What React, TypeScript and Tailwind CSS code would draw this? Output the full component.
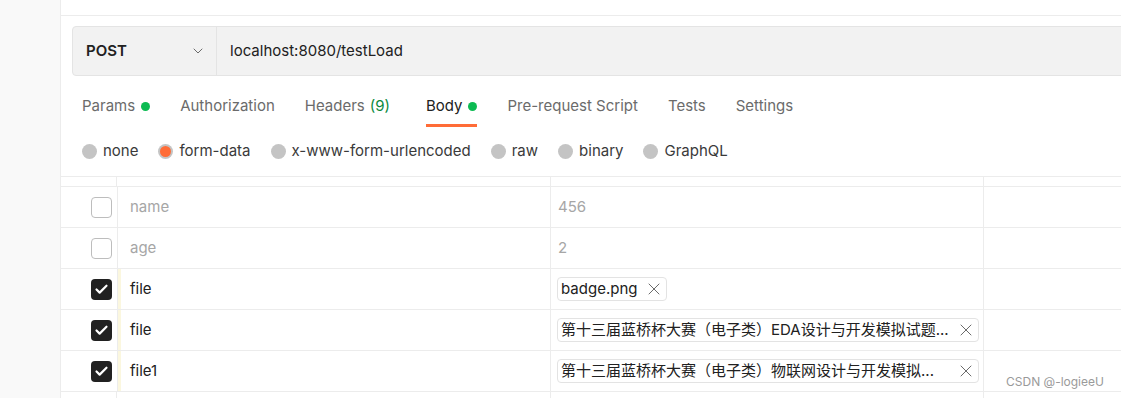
import { ChevronDown, X, Check } from 'lucide-react'

const font = { fontFamily: 'Inter, "Noto Sans CJK SC", sans-serif' }

const tabs = [
  { label: 'Params', dot: true },
  { label: 'Authorization' },
  { label: 'Headers', count: '(9)' },
  { label: 'Body', dot: true, active: true },
  { label: 'Pre-request Script' },
  { label: 'Tests' },
  { label: 'Settings' },
]

const bodyTypes = ['none', 'form-data', 'x-www-form-urlencoded', 'raw', 'binary', 'GraphQL']

type Row = {
  key: string
  checked: boolean
  value?: string
  file?: string
  wide?: boolean
}

const rows: Row[] = [
  { key: 'name', checked: false, value: '456' },
  { key: 'age', checked: false, value: '2' },
  { key: 'file', checked: true, file: 'badge.png' },
  { key: 'file', checked: true, file: '第十三届蓝桥杯大赛（电子类）EDA设计与开发模拟试题...', wide: true },
  { key: 'file1', checked: true, file: '第十三届蓝桥杯大赛（电子类）物联网设计与开发模拟...', wide: true },
]

function Checkbox({ checked }: { checked: boolean }) {
  if (checked) {
    return (
      <div className="flex h-[21px] w-[21px] items-center justify-center rounded-[4px] bg-[#212121]">
        <Check size={15} strokeWidth={3.5} className="text-white" />
      </div>
    )
  }
  return <div className="h-[21px] w-[21px] rounded-[4px] border border-[#bdbdbd] bg-white" />
}

function FileChip({ name, wide }: { name: string; wide?: boolean }) {
  return (
    <div
      className={`flex h-[24px] items-center rounded-[4px] border border-[#e3e3e3] pl-[3px] pr-[2px] ${
        wide ? 'w-[422px] justify-between' : 'gap-[7px]'
      }`}
    >
      <span className="whitespace-nowrap text-[15px] text-[#212121]">{name}</span>
      <X size={20} strokeWidth={1.2} className="shrink-0 text-[#6b6b6b]" />
    </div>
  )
}

function GridRow({ h }: { h: string }) {
  return (
    <div className={`grid shrink-0 grid-cols-[56px_434px_433px_1fr] border-b border-[#ececec] ${h}`}>
      <div className="border-r border-[#ececec]" />
      <div className="border-r border-[#ececec]" />
      <div className="border-r border-[#ececec]" />
      <div />
    </div>
  )
}

export default function App() {
  return (
    <div className="relative flex h-[398px] w-[1121px] overflow-hidden bg-white" style={font}>
      <div className="w-[61px] shrink-0 border-r border-[#ececec] bg-[#f9f9f9]" />

      <div className="min-w-0 flex-1">
        <div className="h-[16px] border-b border-[#ececec]" />

        <div className="mt-[10px] pl-[11px]">
          <div className="flex h-[50px] w-[1100px] rounded-l-[4px] border border-[#e4e4e4] bg-[#f2f2f2]">
            <div className="flex w-[144px] items-center justify-between border-r border-[#e4e4e4] pl-[13px] pr-[10px]">
              <span className="text-[15px] font-semibold text-[#212121]">POST</span>
              <ChevronDown size={16} strokeWidth={1.5} className="text-[#6b6b6b]" />
            </div>
            <div className="flex items-center pl-[13px] text-[15px] text-[#212121]">localhost:8080/testLoad</div>
          </div>
        </div>

        <div className="mt-[13px] flex h-[38px] gap-[30px] pl-[21px]">
          {tabs.map((t) => (
            <div
              key={t.label}
              className={`flex items-center gap-[6px] border-b-[3px] text-[15px] ${
                t.active ? 'border-[#ff6c37] text-[#212121]' : 'border-transparent text-[#6b6b6b]'
              } ${t.count ? 'mr-[6px]' : ''}`}
            >
              <span>
                {t.label}
                {t.count && <span className="ml-[5px] text-[#0c8a3e]">{t.count}</span>}
              </span>
              {t.dot && <span className="h-[9px] w-[9px] rounded-full bg-[#0cbb52]" />}
            </div>
          ))}
        </div>

        <div className="flex h-[49px] items-center gap-[20px] pl-[21px]">
          {bodyTypes.map((b) => (
            <div key={b} className="flex items-center gap-[6px] text-[15px] text-[#3a3a3a]">
              {b === 'form-data' ? (
                <span className="flex h-[15px] w-[15px] items-center justify-center rounded-full bg-[#c4c4c4]">
                  <span className="h-[11px] w-[11px] rounded-full bg-[#ff6c37]" />
                </span>
              ) : (
                <span className="h-[15px] w-[15px] rounded-full bg-[#c4c4c4]" />
              )}
              <span>{b}</span>
            </div>
          ))}
        </div>

        <div className="border-t border-[#ececec]">
          <GridRow h="h-[10px]" />
          {rows.map((r, i) => (
            <div
              key={i}
              className="grid h-[41px] grid-cols-[56px_434px_433px_1fr] border-b border-[#ececec] text-[15px]"
            >
              <div className="flex items-center justify-end pr-[5px]">
                <Checkbox checked={r.checked} />
              </div>
              <div className="flex items-center border-l border-r border-l-[#ececec] border-r-[#ececec]">
                {r.checked ? <div className="h-full w-[3px] bg-[#fbf7df]" /> : <div className="w-[3px]" />}
                <span className={`pl-[9px] ${r.checked ? 'text-[#212121]' : 'text-[#a6a6a6]'}`}>{r.key}</span>
              </div>
              <div className="flex items-center border-r border-[#ececec] pl-[6px]">
                {r.file ? (
                  <FileChip name={r.file} wide={r.wide} />
                ) : (
                  <span className="pl-[1px] text-[#a6a6a6]">{r.value}</span>
                )}
              </div>
              <div />
            </div>
          ))}
          <GridRow h="h-[20px]" />
        </div>
      </div>

      <div className="absolute left-[1006px] top-[373px] text-[12px] text-[#9a9a9a]">CSDN @-logieeU</div>
    </div>
  )
}
